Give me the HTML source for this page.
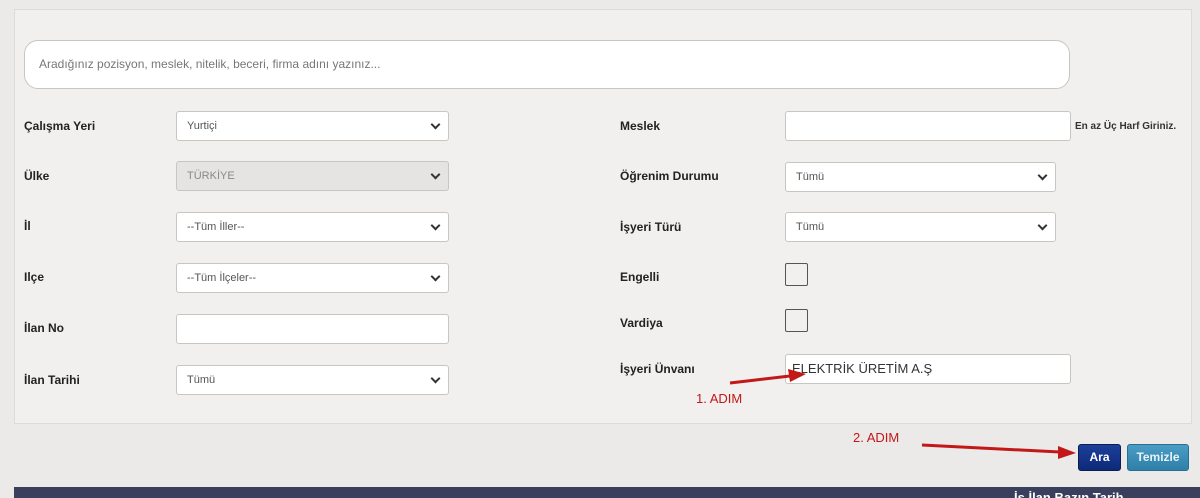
<!DOCTYPE html><html><head><meta charset="utf-8"><style>
body{margin:0;width:1200px;height:498px;background:#eceae8;position:relative;overflow:hidden;font-family:"Liberation Sans",Arial,sans-serif;}
.a{position:absolute}
.panel{left:14px;top:9px;width:1176px;height:413px;background:#f1f0ef;border:1px solid #dddbd8}
.lbl{font-size:12px;font-weight:bold;color:#222}
.sel,.inp{background:#fff;border:1px solid #c9c6c2;border-radius:3px;box-sizing:border-box;font-size:11px;color:#555;padding:0 10px;line-height:28px}
.sel::after{content:"";position:absolute;right:9px;top:9px;width:5px;height:5px;border-right:2px solid #333;border-bottom:2px solid #333;transform:rotate(45deg)}
.chk{width:23px;height:23px;border:1.5px solid #555;background:#f1f0ef;border-radius:2px;box-sizing:border-box}
.red{color:#c21818;font-size:13px}
</style></head><body>
<div class="a panel"></div>
<div class="a" style="left:24px;top:40px;width:1046px;height:49px;background:#fff;border:1px solid #c9c6c2;border-radius:14px;box-sizing:border-box;font-size:12px;color:#777;line-height:47px;padding-left:14px">Aradığınız pozisyon, meslek, nitelik, beceri, firma adını yazınız...</div>

<div class="a lbl" style="left:24px;top:119px">Çalışma Yeri</div>
<div class="a lbl" style="left:24px;top:169px">Ülke</div>
<div class="a lbl" style="left:24px;top:219px">İl</div>
<div class="a lbl" style="left:24px;top:270px">Ilçe</div>
<div class="a lbl" style="left:24px;top:321px">İlan No</div>
<div class="a lbl" style="left:24px;top:373px">İlan Tarihi</div>

<div class="a sel" style="left:176px;top:111px;width:273px;height:30px">Yurtiçi</div>
<div class="a sel" style="left:176px;top:161px;width:273px;height:30px;background:#e6e4e2;color:#888">TÜRKİYE</div>
<div class="a sel" style="left:176px;top:212px;width:273px;height:30px">--Tüm İller--</div>
<div class="a sel" style="left:176px;top:263px;width:273px;height:30px">--Tüm İlçeler--</div>
<div class="a inp" style="left:176px;top:314px;width:273px;height:30px"></div>
<div class="a sel" style="left:176px;top:365px;width:273px;height:30px">Tümü</div>

<div class="a lbl" style="left:620px;top:119px">Meslek</div>
<div class="a lbl" style="left:620px;top:169px">Öğrenim Durumu</div>
<div class="a lbl" style="left:620px;top:220px">İşyeri Türü</div>
<div class="a lbl" style="left:620px;top:270px">Engelli</div>
<div class="a lbl" style="left:620px;top:316px">Vardiya</div>
<div class="a lbl" style="left:620px;top:362px">İşyeri Ünvanı</div>

<div class="a inp" style="left:785px;top:111px;width:286px;height:30px"></div>
<div class="a" style="left:1075px;top:121px;font-size:10px;font-weight:bold;color:#333">En az Üç Harf Giriniz.</div>
<div class="a sel" style="left:785px;top:162px;width:271px;height:30px">Tümü</div>
<div class="a sel" style="left:785px;top:212px;width:271px;height:30px">Tümü</div>
<div class="a chk" style="left:785px;top:263px"></div>
<div class="a chk" style="left:785px;top:309px"></div>
<div class="a inp" style="left:785px;top:354px;width:286px;height:30px;font-size:13px;color:#333;padding-left:6px">ELEKTRİK ÜRETİM A.Ş</div>

<svg class="a" style="left:0;top:0" width="1200" height="498">
<line x1="730" y1="383" x2="790" y2="376" stroke="#c21818" stroke-width="3"/>
<polygon points="806,374 788,369 790,382" fill="#c21818"/>
<line x1="922" y1="445" x2="1060" y2="452" stroke="#c21818" stroke-width="3"/>
<polygon points="1076,453 1058,446 1058,459" fill="#c21818"/>
</svg>
<div class="a red" style="left:696px;top:391px">1. ADIM</div>
<div class="a red" style="left:853px;top:430px">2. ADIM</div>

<div class="a" style="left:1078px;top:444px;width:43px;height:27px;background:linear-gradient(#1d3f9a,#0d2a78);border:1px solid #0a1d55;border-radius:3px;box-sizing:border-box;color:#fff;font-size:12px;font-weight:bold;text-align:center;line-height:25px">Ara</div>
<div class="a" style="left:1127px;top:444px;width:62px;height:27px;background:linear-gradient(#4a9dc4,#2f7fa8);border:1px solid #2a6f92;border-radius:3px;box-sizing:border-box;color:#e8f2f8;font-size:12px;font-weight:bold;text-align:center;line-height:25px">Temizle</div>

<div class="a" style="left:14px;top:487px;width:1186px;height:11px;background:#3a3f5e;overflow:hidden"><div style="position:absolute;left:1000px;top:3px;color:#fff;font-size:13px;font-weight:bold;white-space:nowrap">İş İlan Bazın Tarih</div></div>
</body></html>
